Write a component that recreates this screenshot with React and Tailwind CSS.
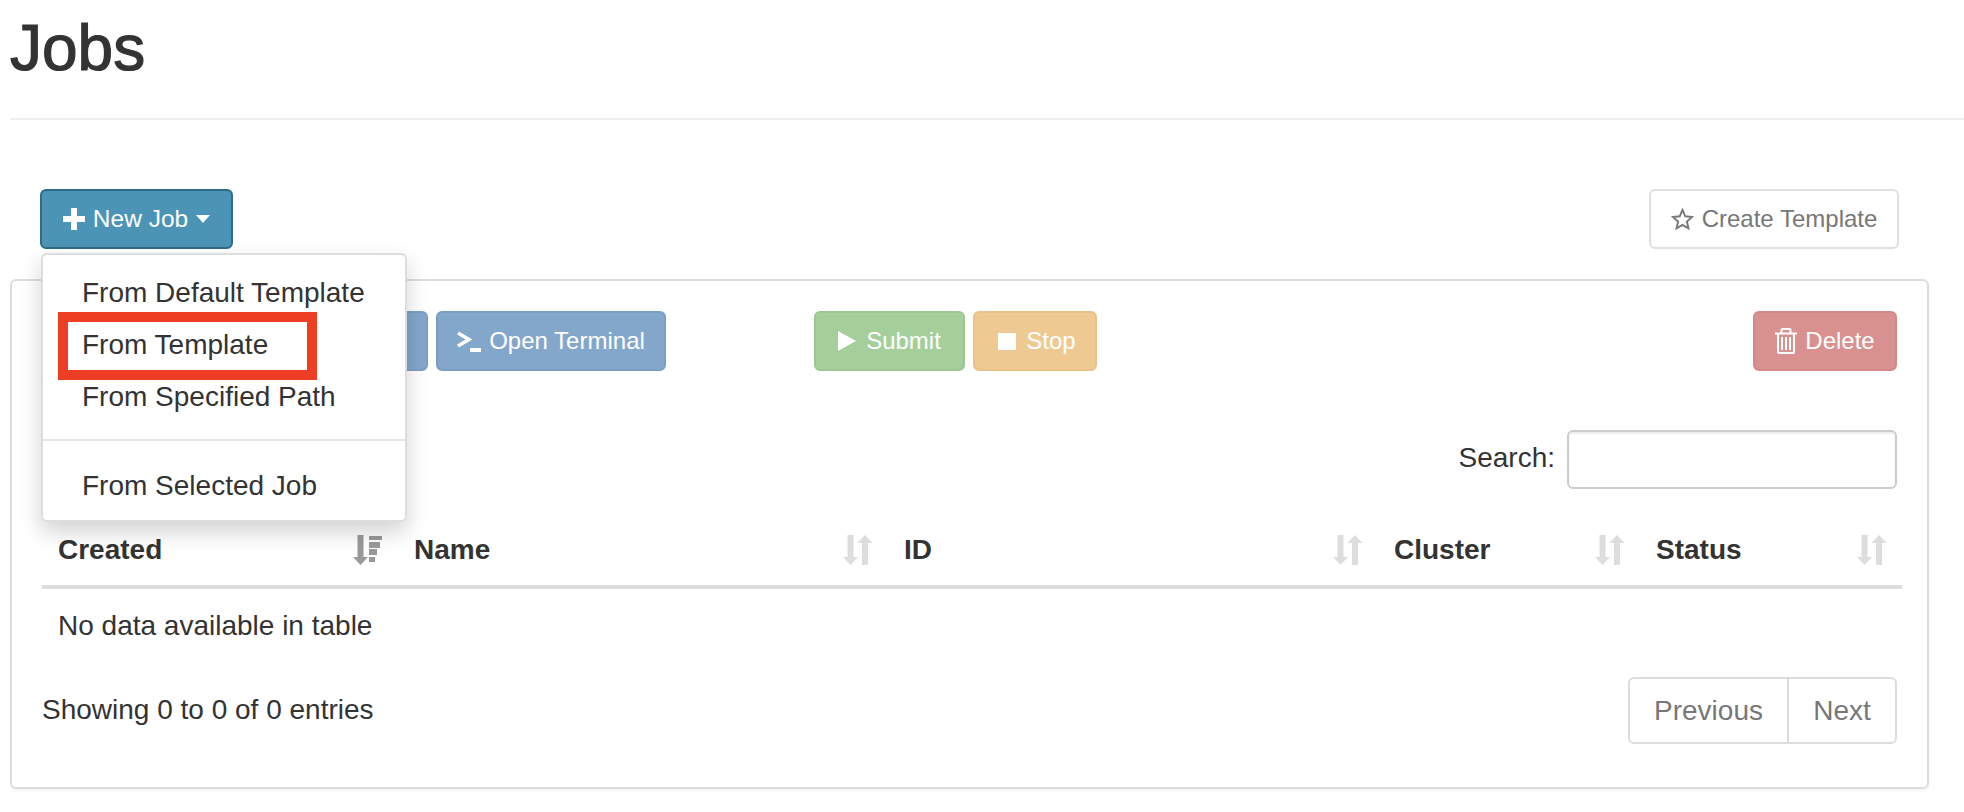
const Btn = ({ className, children }) => (
    <button className={`flex h-[60px] items-center rounded-[6px] border-2 text-[24px] leading-none ${className}`}>
        {children}
    </button>
);

const SortIcon = ({ active }) => (
    <svg viewBox="0 0 30 30" className="h-[30px] w-[30px] shrink-0">
        <path d="M4.500 0h6v22H15L7.500 30 0 22h4.500z" fill={active ? '#999999' : '#dddddd'} />
        {active ? (
            <g fill="#999999">
                <rect x="16" y="1" width="13" height="4" />
                <rect x="16" y="7" width="11" height="6" />
                <rect x="16" y="14" width="8" height="6" />
                <rect x="16" y="22" width="6" height="5" />
            </g>
        ) : (
            <path d="M19 30h6V8h4.500L22 0l-7.500 8H19z" fill="#dddddd" />
        )}
    </svg>
);

const columns = [
    { name: 'Created', width: 'w-[356px]', active: true },
    { name: 'Name', width: 'w-[490px]' },
    { name: 'ID', width: 'w-[490px]' },
    { name: 'Cluster', width: 'w-[262px]' },
    { name: 'Status', width: 'w-[262px]' },
];

function NewJobMenu() {
    const item = 'h-[52px] pl-[39px] flex items-center text-[28px] text-[#333333] whitespace-nowrap';
    return (
        <div className="absolute left-[1px] top-[64px] z-10 h-[269px] w-[366px] rounded-[6px] border-2 border-[#dddddd] bg-white pt-[12px] shadow-[0_10px_22px_rgba(0,0,0,0.18)]">
            <div className={item}>From Default Template</div>
            <div className={item}>From Template</div>
            <div className={item}>From Specified Path</div>
            <div className="mb-[19px] mt-[16px] h-[2px] bg-[#e5e5e5]" />
            <div className={item}>From Selected Job</div>
            <div className="absolute left-[15px] top-[57px] h-[68px] w-[259px] border-[10px] border-[#ee3f24]" />
        </div>
    );
}

export default function App() {
    return (
        <div className="h-[812px] overflow-hidden bg-white font-['Liberation_Sans',Arial,sans-serif] text-[28px] text-[#333333]">
            <div className="flex h-[118px] items-start pl-[10px]">
                <h1 className="mt-[12px] text-[64px] font-normal leading-[72px] [-webkit-text-stroke:1.2px_#333333]">Jobs</h1>
            </div>
            <div className="ml-[10px] h-[2px] bg-[#eeeeee]" />

            <div className="ml-[40px] mr-[65px] mt-[69px] flex items-center justify-between">
                <div className="relative">
                    <Btn className="w-[193px] justify-center gap-[8px] border-[#2e6c85] bg-[#4b94b6] text-white">
                        <svg viewBox="0 0 22 22" className="h-[22px] w-[22px]">
                            <path d="M8 0h6v8h8v6h-8v8H8v-8H0V8h8z" fill="#ffffff" />
                        </svg>
                        <span className="flex items-center gap-[8px] text-[24.5px]">
                            New Job
                            <svg viewBox="0 0 14 8" className="h-[8px] w-[14px]">
                                <path d="M0 0h14L7 8z" fill="#ffffff" />
                            </svg>
                        </span>
                    </Btn>
                    <NewJobMenu />
                </div>
                <Btn className="w-[250px] justify-center gap-[8px] border-[#e0e0e0] bg-white text-[#777777]">
                    <svg viewBox="0 0 24 23" className="h-[22px] w-[23px]">
                        <path d="M12 2l2.900 6.700 7.100.7-5.400 4.800 1.600 7.100L12 17.600l-6.200 3.700 1.600-7.100L2 9.400l7.100-.7z" fill="none" stroke="#777777" strokeWidth="2" />
                    </svg>
                    Create Template
                </Btn>
            </div>

            <div className="ml-[10px] mr-[35px] mt-[30px] h-[510px] rounded-[6px] border-2 border-[#dddddd] pl-[30px] pr-[25px] pt-[30px] shadow-[0_2px_3px_rgba(0,0,0,0.05)]">
                <div className="ml-[-2px] mr-[5px] flex items-center">
                    <Btn className="ml-[30px] w-[358px] justify-end border-[#7b9fc3] bg-[#83a7cb] pr-[20px] text-white">Details</Btn>
                    <Btn className="ml-[8px] w-[230px] justify-center gap-[8px] border-[#7b9fc3] bg-[#83a7cb] text-white">
                        <svg viewBox="0 0 24 21" className="h-[21px] w-[24px]">
                            <path d="M1 2l11 6.500L1 15" fill="none" stroke="#ffffff" strokeWidth="3.500" />
                            <rect x="13" y="17" width="11" height="4" fill="#ffffff" />
                        </svg>
                        Open Terminal
                    </Btn>
                    <Btn className="ml-[148px] w-[151px] justify-center gap-[10px] border-[#9cc792] bg-[#a4cf9a] text-white">
                        <svg viewBox="0 0 18 20" className="h-[20px] w-[18px]">
                            <path d="M0 0l18 10L0 20z" fill="#ffffff" />
                        </svg>
                        Submit
                    </Btn>
                    <Btn className="ml-[8px] w-[124px] justify-center gap-[10px] border-[#e9c289] bg-[#eeca92] pl-[4px] text-white">
                        <span className="h-[17px] w-[18px] bg-white" />
                        Stop
                    </Btn>
                    <Btn className="ml-auto w-[144px] justify-center gap-[8px] border-[#d38886] bg-[#d99190] text-white">
                        <svg viewBox="0 0 22 26" className="h-[26px] w-[22px]">
                            <path d="M0 5.500h22M6.500 5V2a1 1 0 0 1 1-1h7a1 1 0 0 1 1 1v3M3 6v18a1 1 0 0 0 1 1h14a1 1 0 0 0 1-1V6M7 9v13M11 9v13M15 9v13" fill="none" stroke="#ffffff" strokeWidth="2" />
                        </svg>
                        Delete
                    </Btn>
                </div>

                <div className="mr-[5px] mt-[59px] flex items-center justify-end gap-[12px]">
                    <label className="relative bottom-[2px]">Search:</label>
                    <input className="h-[59px] w-[330px] rounded-[6px] border-2 border-[#cccccc] shadow-[inset_0_2px_2px_rgba(0,0,0,0.075)]" />
                </div>

                <table className="mt-[26px] w-[1860px] table-fixed border-separate border-spacing-0">
                    <thead>
                        <tr>
                            {columns.map((col) => (
                                <th key={col.name} className={`${col.width} h-[74px] border-b-4 border-[#dddddd] pl-[16px] pr-[15px] text-left font-bold`}>
                                    <div className="flex items-center justify-between">
                                        {col.name}
                                        <SortIcon active={col.active} />
                                    </div>
                                </th>
                            ))}
                        </tr>
                    </thead>
                    <tbody>
                        <tr>
                            <td colSpan="5" className="h-[74px] pl-[16px]">No data available in table</td>
                        </tr>
                    </tbody>
                </table>

                <div className="mr-[5px] mt-[14px] flex items-center justify-between">
                    <div className="mb-[2px]">Showing 0 to 0 of 0 entries</div>
                    <div className="flex h-[67px] overflow-hidden rounded-[6px] border-2 border-[#dddddd] text-[#777777]">
                        <div className="flex w-[159px] items-center justify-center border-r-2 border-[#dddddd]">Previous</div>
                        <div className="flex w-[106px] items-center justify-center">Next</div>
                    </div>
                </div>
            </div>
        </div>
    );
}
